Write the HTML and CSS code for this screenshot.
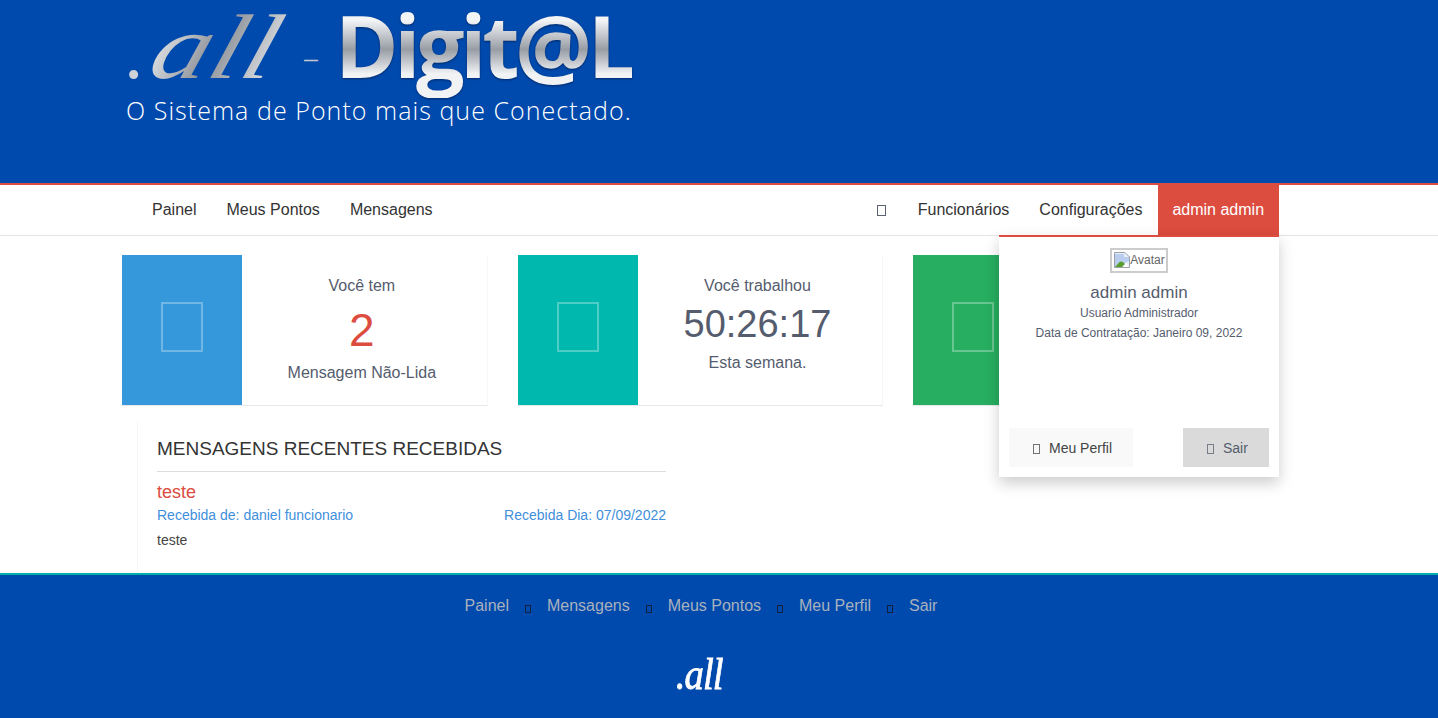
FILE: index.html
```html
<!DOCTYPE html>
<html lang="pt-BR">
<head>
  <meta charset="UTF-8" />
  <title>.all Digit@L</title>
  <link rel="stylesheet" href="styles.css">
</head>
<body>

  <!-- Logo -->
  <header class="top">
    <div class="logo">
      <div class="logo-row">
        <span class="logo-dot">.</span>
        <span class="logo-all">all</span>
        <span class="logo-dash">—</span>
        <span class="logo-name">Digit@L</span>
      </div>
      <div class="logo-tag">O Sistema de Ponto mais que Conectado.</div>
    </div>
  </header>

  <!-- Menu -->
  <nav class="menu">
    <div class="menu-group">
      <a class="menu-item">Painel</a>
      <a class="menu-item">Meus Pontos</a>
      <a class="menu-item">Mensagens</a>
    </div>
    <div class="menu-group">
      <a class="menu-item"><span class="tofu tofu-nav"></span></a>
      <a class="menu-item">Funcionários</a>
      <a class="menu-item">Configurações</a>
      <div class="user">
        <a class="user-name">admin admin</a>
        <div class="user-drop">
          <div class="avatar">
            <svg class="avatar-icon" width="16" height="16" viewBox="0 0 16 16">
              <path d="M0.5 0.5H11L15.5 5V15.5H0.5Z" fill="#e8eef8" stroke="#9aa0a8"/>
              <path d="M1 2H10V5H15V9L9 12L4 15H1Z" fill="#b9cdef"/>
              <path d="M1 15L6 9.5C8 9 10 10.5 11 12L8 15Z" fill="#5a9e32"/>
              <path d="M9 15L12 11L15 15Z" fill="#ffffff"/>
            </svg>
            <span>Avatar</span>
          </div>
          <div class="user-title">admin admin</div>
          <div class="user-line">Usuario Administrador</div>
          <div class="user-line">Data de Contratação: Janeiro 09, 2022</div>
          <div class="user-actions">
            <a class="user-btn btn-profile"><span class="tofu tofu-btn"></span>Meu Perfil</a>
            <a class="user-btn btn-exit"><span class="tofu tofu-btn"></span>Sair</a>
          </div>
        </div>
      </div>
    </div>
  </nav>

  <main class="content">
    <div class="cards">
      <div class="card">
        <div class="card-icon bg-blue"><span class="tofu tofu-big"></span></div>
        <div class="card-body">
          <div class="card-text">Você tem</div>
          <div class="card-num red">2</div>
          <div class="card-text">Mensagem Não-Lida</div>
        </div>
      </div>
      <div class="card">
        <div class="card-icon bg-teal"><span class="tofu tofu-big"></span></div>
        <div class="card-body">
          <div class="card-text">Você trabalhou</div>
          <div class="card-num">50:26:17</div>
          <div class="card-text">Esta semana.</div>
        </div>
      </div>
      <div class="card">
        <div class="card-icon bg-green"><span class="tofu tofu-big"></span></div>
        <div class="card-body"></div>
      </div>
    </div>

    <!-- Mensagens -->
    <section class="messages">
      <h2 class="messages-title">Mensagens Recentes Recebidas</h2>
      <div class="msg-subject">teste</div>
      <div class="msg-meta">
        <span>Recebida de: daniel funcionario</span>
        <span>Recebida Dia: 07/09/2022</span>
      </div>
      <p class="msg-text">teste</p>
    </section>
  </main>

  <footer class="bottom">
    <div class="bottom-links">
      <a>Painel</a><span class="tofu tofu-sep"></span>
      <a>Mensagens</a><span class="tofu tofu-sep"></span>
      <a>Meus Pontos</a><span class="tofu tofu-sep"></span>
      <a>Meu Perfil</a><span class="tofu tofu-sep"></span>
      <a>Sair</a>
    </div>
    <div class="bottom-logo">.all</div>
  </footer>

</body>
</html>
```

FILE: styles.css
```css
:root {
  --blue: #004aad;
  --red: #dc4c3f;
  --text: #333333;
  --muted: #555c6e;
}

* {
  box-sizing: border-box;
}

body {
  font-family: "Liberation Sans", Arial, sans-serif;
  font-size: 14px;
  color: var(--text);
  background: #ffffff;
  margin: 0;
}

/* missing icon font boxes */
.tofu {
  display: inline-block;
  border: 1px solid currentColor;
}

.tofu-nav {
  width: 9px;
  height: 11px;
  margin-right: 2px;
  vertical-align: -1px;
  color: #5a6270;
}

.tofu-btn {
  width: 7px;
  height: 10px;
  margin-right: 9px;
  vertical-align: -1px;
  opacity: 0.75;
}

.tofu-big {
  width: 42px;
  height: 50px;
  border: 2px solid rgba(255,255,255,0.3);
  opacity: 1;
}

.tofu-sep {
  width: 6px;
  height: 8px;
  margin: 0 11.5px 0 16px;
  color: #10213f;
  vertical-align: -2px;
}

/* header */
.top {
  height: 183px;
  background: var(--blue);
  padding: 0 0 0 126px;
}

.logo {
  width: 510px;
}

.logo-row {
  display: flex;
  align-items: baseline;
  height: 94px;
}

.logo-dot, .logo-all {
  font-family: "Liberation Serif", serif;
  font-style: italic;
  color: #cfd3d8;
}

.logo-dot {
  font-size: 76px;
  line-height: 94px;
  margin-right: 2px;
}

.logo-all {
  font-size: 92px;
  line-height: 94px;
  width: 144px;
  background: linear-gradient(100deg, #eceef0, #8d9299 35%, #dfe2e5 70%);
  -webkit-background-clip: text;
  background-clip: text;
  color: transparent;
  transform: scaleX(1.27) skewX(-14deg);
  transform-origin: 0 78%;
}

.logo-dash {
  align-self: flex-start;
  width: 44px;
  padding-right: 4px;
  margin-top: 50px;
  font-size: 14px;
  font-weight: bold;
  line-height: 20px;
  text-align: center;
  color: #c5c9ce;
}

.logo-name {
  font-family: "Open Sans", sans-serif;
  font-weight: 700;
  font-size: 86px;
  line-height: 87px;
  padding-bottom: 10px;
  letter-spacing: -4.4px;
  background: linear-gradient(#f2f4f6 20%, #989da5 50%, #f0f2f4 75%);
  -webkit-background-clip: text;
  background-clip: text;
  color: transparent;
  filter: drop-shadow(0 1px 1px rgba(0,20,60,0.6));
}

.logo-tag {
  font-family: "Open Sans", sans-serif;
  font-weight: 300;
  font-size: 25px;
  line-height: 32px;
  letter-spacing: 1.05px;
  color: #ffffff;
  white-space: nowrap;
}

/* menu */
.menu {
  display: flex;
  justify-content: space-between;
  height: 53px;
  padding: 0 159px 0 137px;
  border-top: 2px solid var(--red);
  border-bottom: 1px solid #e4e4e4;
  font-size: 16px;
}

.menu-group {
  display: flex;
}

.menu-item {
  padding: 0 15px;
  line-height: 50px;
  color: var(--text);
}

.user {
  position: relative;
}

.user-name {
  display: block;
  width: 121.5px;
  height: 52px;
  line-height: 50px;
  text-align: center;
  color: #ffffff;
  background: var(--red);
}

.user-drop {
  position: absolute;
  z-index: 10;
  top: 50px;
  right: 0;
  width: 280px;
  height: 242px;
  padding: 11px 10px 10px;
  display: flex;
  flex-direction: column;
  align-items: center;
  background: #ffffff;
  border-top: 2px solid var(--red);
  box-shadow: 0 6px 14px rgba(0,0,0,0.2);
  color: var(--muted);
  font-size: 12px;
}

.avatar {
  display: flex;
  align-items: center;
  height: 25px;
  padding: 0 1px 2px 2px;
  border: 2px solid #cccccc;
  color: #666666;
}

.user-title {
  font-size: 17px;
  line-height: 20px;
  margin-top: 10px;
}

.user-line {
  line-height: 20px;
}

.user-actions {
  display: flex;
  justify-content: space-between;
  align-self: stretch;
  margin-top: auto;
  font-size: 14px;
}

.user-btn {
  height: 39px;
  line-height: 40px;
  color: var(--muted);
}

.btn-profile {
  width: 124px;
  padding-left: 24px;
  background: #f9f9f9;
  color: #444444;
}

.btn-exit {
  width: 86px;
  padding-left: 24px;
  background: #dadada;
}

/* cards */
.content {
  height: 337px;
  padding: 19px 159px 0 122px;
}

.cards {
  display: grid;
  grid-template-columns: repeat(3, 1fr);
  column-gap: 30px;
}

.card {
  display: flex;
  height: 151px;
  border-right: 1px solid #f7f7f7;
  border-bottom: 1px solid #e8e8e8;
}

.card-icon {
  display: flex;
  align-items: center;
  justify-content: center;
  width: 120px;
  height: 150px;
  padding-bottom: 6px;
}

.bg-blue { background: #3498db; }
.bg-teal { background: #00b8ad; }
.bg-green { background: #27ae60; }

.card-body {
  flex: 1;
  padding: 21px 5px 0 0;
  text-align: center;
  color: var(--muted);
}

.card-text {
  font-size: 16px;
  line-height: 20px;
}

.card-num {
  font-size: 38px;
  line-height: 57px;
}

.card-num.red {
  padding-top: 1px;
  font-size: 46px;
  line-height: 66px;
  color: var(--red);
}

/* messages */
.messages {
  width: 549px;
  margin: 15px 0 0 15px;
  padding: 16px 20px 0 19px;
  height: 152px;
  border-left: 1px solid #f7f7f7;
}

.messages-title {
  margin: 0 0 10px;
  padding-bottom: 10px;
  font-size: 19px;
  font-weight: normal;
  line-height: 24px;
  text-transform: uppercase;
  border-bottom: 1px solid #dddddd;
}

.msg-subject {
  font-size: 18px;
  line-height: 20px;
  color: var(--red);
}

.msg-meta {
  display: flex;
  justify-content: space-between;
  margin-top: 3px;
  line-height: 20px;
  color: #3f8fdb;
}

.msg-text {
  margin: 5px 0 0;
  line-height: 20px;
  color: #444444;
}

/* footer */
.bottom {
  height: 145px;
  background: var(--blue);
  border-top: 2px solid #00b0a8;
  padding: 21px 36px 0 0;
  text-align: center;
  overflow: hidden;
}

.bottom-links {
  font-size: 16px;
  line-height: 20px;
  color: #a9b1bd;
}

.bottom-logo {
  margin-top: 34px;
  padding-right: 4px;
  font-family: "Liberation Serif", serif;
  font-style: italic;
  font-size: 44px;
  line-height: 50px;
  letter-spacing: -1px;
  color: #ffffff;
  -webkit-text-stroke: 0.8px #ffffff;
  transform: scaleX(0.88);
}
```
